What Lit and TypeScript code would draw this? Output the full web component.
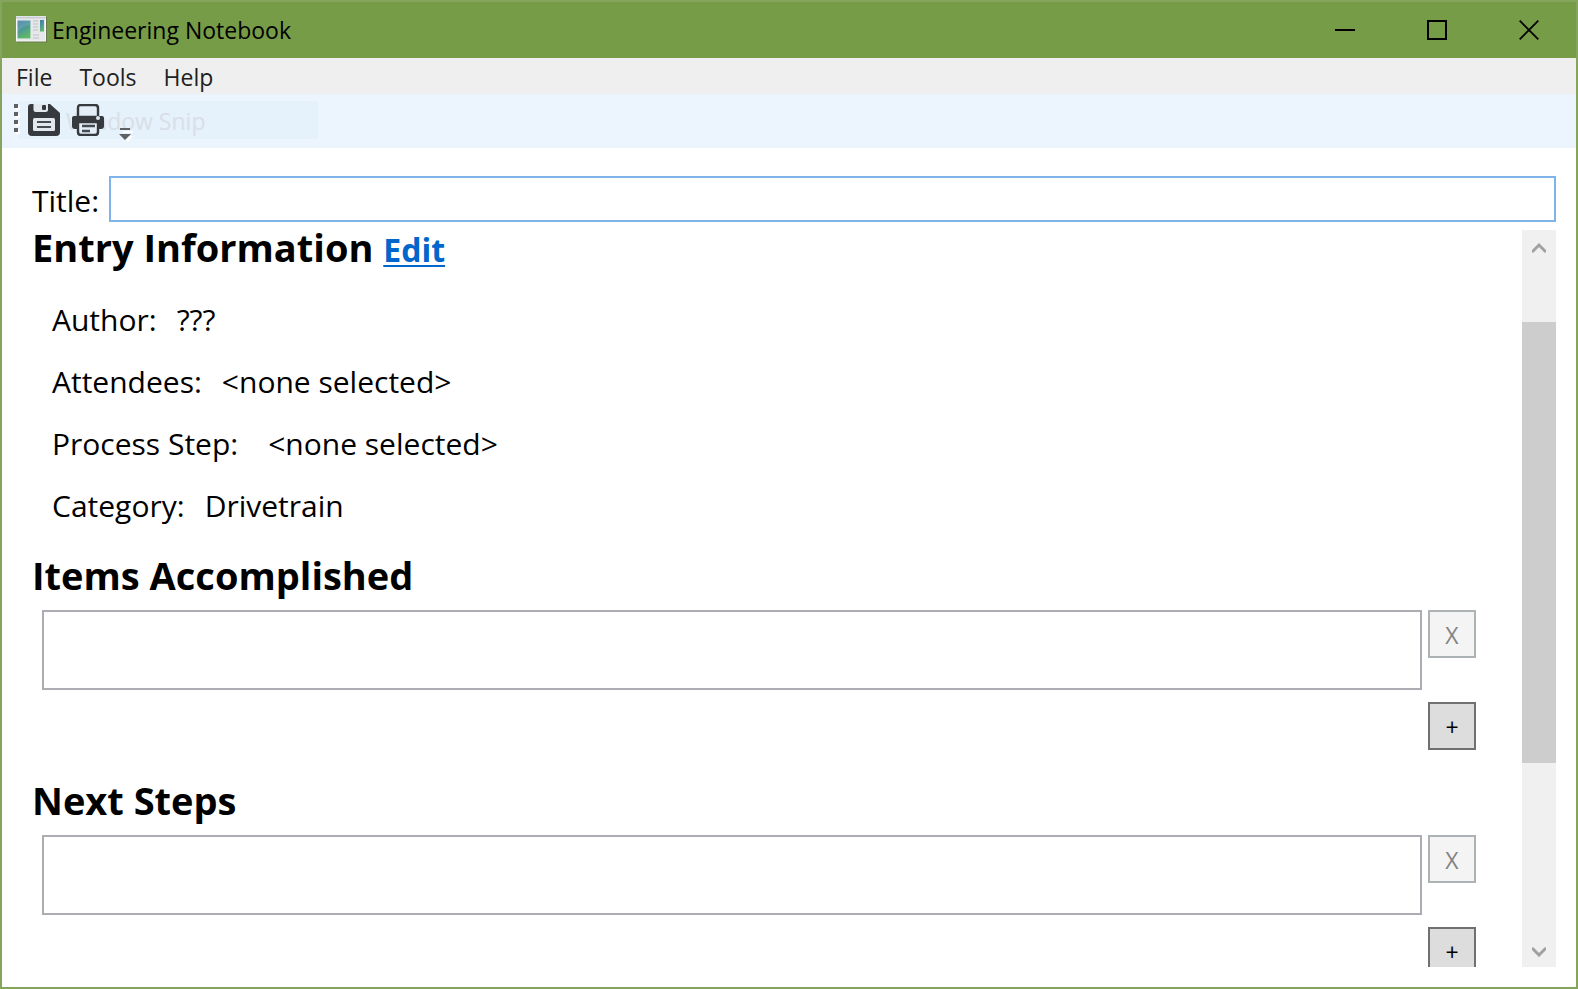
import { LitElement, html, css } from "lit";
import { customElement, property, state } from "lit/decorators.js";

interface Field {
  label: string;
  value: string;
  wide?: boolean;
}

@customElement("entry-list")
class EntryList extends LitElement {
  @property() heading = "";
  @state() private items: string[] = [""];

  static styles = css`
    :host {
      display: block;
      margin-bottom: 24px;
    }
    .heading {
      margin: 0 0 9px;
      font-size: 38px;
      font-weight: 700;
      line-height: 52px;
      color: #000;
    }
    .rows {
      display: flex;
      flex-direction: column;
      gap: 12px;
      padding: 0 46px 0 10px;
    }
    .row {
      display: flex;
      align-items: flex-start;
      gap: 6px;
    }
    .text {
      flex: 1;
      min-width: 0;
      height: 80px;
      box-sizing: border-box;
      margin: 0;
      padding: 4px 6px;
      border: 2px solid #abadb3;
      border-radius: 0;
      background: #fff;
      font: inherit;
      font-size: 30px;
      resize: none;
      outline: none;
    }
    .button {
      width: 48px;
      height: 48px;
      box-sizing: border-box;
      padding: 2px 0 0;
      border: 2px solid #707070;
      border-radius: 0;
      background: #ddd;
      font: inherit;
      font-size: 23px;
      line-height: 24px;
      color: #000;
    }
    .button:disabled {
      border-color: #adb2b5;
      background: #f4f4f4;
      color: #838383;
    }
    .add {
      align-self: flex-end;
    }
  `;

  private add() {
    this.items = [...this.items, ""];
  }

  private remove(index: number) {
    this.items = this.items.filter((_, i) => i !== index);
  }

  render() {
    return html`
      <h2 class="heading">${this.heading}</h2>
      <div class="rows">
        ${this.items.map(
          (item, i) => html`
            <div class="row">
              <textarea class="text" aria-label="${this.heading} ${i + 1}" .value=${item}></textarea>
              <button
                class="button"
                aria-label="Remove"
                ?disabled=${this.items.length === 1}
                @click=${() => this.remove(i)}
              >X</button>
            </div>
          `
        )}
        <button class="button add" aria-label="Add" @click=${this.add}>+</button>
      </div>
    `;
  }
}

@customElement("app-root")
class AppRoot extends LitElement {
  private fields: Field[] = [
    { label: "Author:", value: "???" },
    { label: "Attendees:", value: "<none selected>" },
    { label: "Process Step:", value: "<none selected>", wide: true },
    { label: "Category:", value: "Drivetrain" },
  ];

  static styles = css`
    :host {
      display: flex;
      flex-direction: column;
      box-sizing: border-box;
      height: 100vh;
      border: 2px solid #84a55b;
      background: #fff;
      color: #000;
      font-family: "Open Sans", "Noto Sans", sans-serif;
    }
    svg {
      display: block;
    }
    button {
      margin: 0;
      padding: 0;
      border: 0;
      background: none;
      font: inherit;
      color: inherit;
    }
    .titlebar {
      display: flex;
      flex: none;
      align-items: center;
      height: 56px;
      padding-left: 13px;
      background: #779c48;
    }
    .caption {
      flex: 1;
      margin: 0 0 0 5px;
      font-size: 23px;
      font-weight: 400;
      line-height: 56px;
    }
    .controls {
      display: flex;
      padding-right: 1px;
    }
    .control {
      display: grid;
      place-items: center;
      width: 92px;
      height: 54px;
    }
    .menu {
      display: flex;
      flex: none;
      gap: 27px;
      height: 36px;
      padding-left: 14px;
      background: #efefef;
      font-size: 23px;
      line-height: 38px;
      color: #212121;
    }
    .toolbar {
      position: relative;
      display: flex;
      flex: none;
      align-items: flex-start;
      height: 54px;
      box-sizing: border-box;
      padding: 10px 0 0 12px;
      background: #ecf4fd;
    }
    .snip {
      position: absolute;
      top: 7px;
      left: 16px;
      width: 300px;
      height: 38px;
      box-sizing: border-box;
      padding-left: 48px;
      background: #e5f1fb;
      font-size: 23px;
      line-height: 40px;
      color: #d8dfe8;
    }
    .grip,
    .tool,
    .overflow {
      position: relative;
    }
    .tool {
      margin-left: 8px;
    }
    .tool + .tool {
      margin-left: 12px;
    }
    .overflow {
      margin: 24px 0 0 15px;
    }
    .body {
      display: flex;
      flex: 1;
      flex-direction: column;
      min-height: 0;
      padding: 28px 20px 20px 30px;
    }
    .title-row {
      display: flex;
      flex: none;
      gap: 10px;
      height: 46px;
      font-size: 30px;
      line-height: 50px;
    }
    .title-input {
      flex: 1;
      min-width: 0;
      height: 46px;
      box-sizing: border-box;
      padding: 0 6px;
      border: 2px solid #7eb4ea;
      border-radius: 0;
      background: #fff;
      font: inherit;
      outline: none;
    }
    .pane {
      display: flex;
      flex: 1;
      min-height: 0;
    }
    .content {
      flex: 1;
      min-width: 0;
      overflow: hidden;
    }
    .heading {
      margin: 0 0 14px;
      font-size: 38px;
      font-weight: 700;
      line-height: 50px;
    }
    .edit {
      font-size: 32px;
      color: #0066cc;
      text-decoration-thickness: 2px;
      text-underline-offset: 3px;
    }
    .fields {
      margin: 0 0 12px;
      padding-left: 20px;
      font-size: 30px;
      line-height: 62px;
    }
    .field {
      display: flex;
      gap: 20px;
    }
    .field.wide {
      gap: 30px;
    }
    .field dt,
    .field dd {
      margin: 0;
    }
    .scrollbar {
      display: flex;
      flex: none;
      flex-direction: column;
      width: 34px;
      margin-top: 8px;
      background: #f0f0f0;
    }
    .arrow {
      display: grid;
      flex: none;
      place-items: center;
      width: 34px;
      height: 34px;
    }
    .track {
      display: grid;
      flex: 1;
      grid-template-rows: 58fr 441fr 170fr;
    }
    .thumb {
      grid-row: 2;
      background: #cdcdcd;
    }
  `;

  render() {
    return html`
      <header class="titlebar">
        <svg width="32" height="28" viewBox="0 0 32 28" aria-hidden="true">
          <defs>
            <linearGradient id="pane" x1="0" y1="0" x2=".4" y2="1">
              <stop offset="0" stop-color="#3f79ad" />
              <stop offset=".5" stop-color="#4b9696" />
              <stop offset="1" stop-color="#61b66b" />
            </linearGradient>
          </defs>
          <rect x="2" y="1" width="30" height="25.500" fill="#65794b" />
          <rect x="1.500" y=".5" width="29" height="24.500" fill="#e6e7ea" stroke="#f7f7f7" />
          <path d="M1 1.500h30" stroke="#c9ced6" stroke-width="2" />
          <rect x="2" y="4" width="14" height="19" fill="#f8f8f8" />
          <rect x="2.500" y="4.500" width="13" height="18" fill="url(#pane)" />
          <path d="M2.500 16Q7 10 15.500 9V4.500h-13z" fill="#fff" opacity=".13" />
          <rect x="25" y="4" width="4" height="11.500" fill="url(#pane)" />
          <path d="M18 5h5M18 8h5M18 11h5M18 14h5M18 19h6M18 22h6" stroke="#bfc2c5" />
        </svg>
        <h1 class="caption">Engineering Notebook</h1>
        <div class="controls">
          <button class="control" aria-label="Minimize">
            <svg width="20" height="20"><path d="M0 10h20" stroke="#000" stroke-width="2" /></svg>
          </button>
          <button class="control" aria-label="Maximize">
            <svg width="20" height="20"><path d="M1 1h18v18H1z" fill="none" stroke="#000" stroke-width="2" /></svg>
          </button>
          <button class="control" aria-label="Close">
            <svg width="20" height="20"><path d="M.7.7l18.600 18.600M19.300.7L.7 19.300" stroke="#000" stroke-width="1.800" /></svg>
          </button>
        </div>
      </header>
      <nav class="menu">
        <button>File</button>
        <button>Tools</button>
        <button>Help</button>
      </nav>
      <div class="toolbar">
        <div class="snip">Window Snip</div>
        <svg class="grip" width="6" height="30" viewBox="0 0 6 30" aria-hidden="true">
          <path d="M2 2h4v4H2zM2 10h4v4H2zM2 18h4v4H2zM2 26h4v4H2z" fill="#fff" />
          <path d="M0 0h4v4H0zM0 8h4v4H0zM0 16h4v4H0zM0 24h4v4H0z" fill="#606060" />
        </svg>
        <button class="tool" aria-label="Save">
          <svg width="32" height="32" viewBox="0 0 32 32">
            <path d="M3 0h19l10 9v19q0 4-4 4H4q-4 0-4-4V3q0-3 3-3z" fill="#363a3e" />
            <path d="M5.500 0H20v5.500q0 2.500-2.500 2.500H8q-2.500 0-2.500-2.500z" fill="#e3e8ee" />
            <rect x="14" y="1" width="4" height="5" rx="1" fill="#363a3e" />
            <rect x="5" y="14" width="22" height="13" rx="1.500" fill="#e3e8ee" />
            <path d="M9 18h14M9 23h14" stroke="#454b52" stroke-width="2.200" />
          </svg>
        </button>
        <button class="tool" aria-label="Print">
          <svg width="32" height="32" viewBox="0 0 32 32">
            <path d="M2 12h28q2 0 2 2v8q0 3-3 3H3q-3 0-3-3v-8q0-2 2-2z" fill="#363a3e" />
            <path d="M6 13V4q0-3 3-3h14q3 0 3 3v9z" fill="#e5eef7" stroke="#363a3e" stroke-width="2.400" />
            <path d="M5 13h22v5H5z" fill="#363a3e" />
            <circle cx="26" cy="14" r="2" fill="#dfe6ed" />
            <path d="M6 18h20v10q0 3-3 3H9q-3 0-3-3z" fill="#e5eef7" stroke="#363a3e" stroke-width="2.400" />
            <path d="M10 22h13M10 27h8" stroke="#454b52" stroke-width="2.400" />
          </svg>
        </button>
        <button class="overflow" aria-label="More tools">
          <svg width="14" height="14" viewBox="0 0 14 14">
            <path d="M4 3h10v2H4zM4 8h10l-5 6z" fill="#fff" />
            <path d="M1 0h10v2H1zM0 6h12l-6 6z" fill="#5f6163" />
          </svg>
        </button>
      </div>
      <main class="body">
        <div class="title-row">
          <label for="title">Title:</label>
          <input id="title" class="title-input" type="text" />
        </div>
        <div class="pane">
          <div class="content">
            <h2 class="heading">Entry Information <a class="edit" href="#edit">Edit</a></h2>
            <dl class="fields">
              ${this.fields.map(
                (f) => html`
                  <div class="field ${f.wide ? "wide" : ""}">
                    <dt>${f.label}</dt>
                    <dd>${f.value}</dd>
                  </div>
                `
              )}
            </dl>
            <entry-list heading="Items Accomplished"></entry-list>
            <entry-list heading="Next Steps"></entry-list>
          </div>
          <div class="scrollbar">
            <button class="arrow" aria-label="Scroll up">
              <svg width="14" height="14"><path d="M0 12l7-7 7 7" fill="none" stroke="#a0a0a0" stroke-width="3" /></svg>
            </button>
            <div class="track"><div class="thumb"></div></div>
            <button class="arrow" aria-label="Scroll down">
              <svg width="14" height="14"><path d="M0 5l7 7 7-7" fill="none" stroke="#a0a0a0" stroke-width="3" /></svg>
            </button>
          </div>
        </div>
      </main>
    `;
  }
}
